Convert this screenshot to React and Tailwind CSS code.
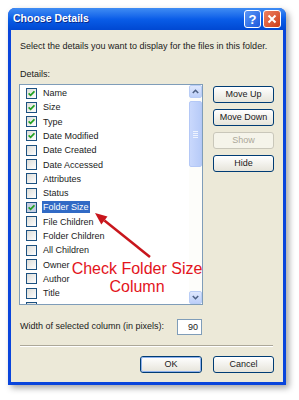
import React from "react";

const items = [
  ["Name", true],
  ["Size", true],
  ["Type", true],
  ["Date Modified", true],
  ["Date Created", false],
  ["Date Accessed", false],
  ["Attributes", false],
  ["Status", false],
  ["Folder Size", true, true],
  ["File Children", false],
  ["Folder Children", false],
  ["All Children", false],
  ["Owner", false],
  ["Author", false],
  ["Title", false],
  ["", false],
];

function Check({ on, sel }) {
  return (
    <span
      className={`w-[11px] h-[11px] shrink-0 border border-[#1c5180] flex items-center justify-center ${
        sel ? "bg-[#c3cde2]" : "bg-linear-to-br from-[#dcdcd7] to-white"
      }`}
    >
      {on && (
        <svg width="7" height="7" viewBox="0 0 7 7">
          <path d="M0.6 3.3 L2.6 5.3 L6.4 1.3" stroke="#21a121" strokeWidth="1.7" fill="none" />
        </svg>
      )}
    </span>
  );
}

function XpButton({ children, disabled, def }) {
  if (disabled) {
    return (
      <div className="h-[17px] rounded-[3px] border border-[#c9c7ba] bg-[#f5f4ea] text-[#aca899] flex items-center justify-center">
        {children}
      </div>
    );
  }
  return (
    <div className="h-[17px] rounded-[3px] border border-[#003c74] bg-linear-to-b from-white to-[#e6e4da] flex items-center justify-center">
      <div
        className={`w-full h-full rounded-[2px] flex items-center justify-center ${
          def ? "border border-[#8eb1ec]" : ""
        }`}
      >
        {children}
      </div>
    </div>
  );
}

function ScrollArrow({ down }) {
  return (
    <div className="h-[13px] w-[13px] rounded-[2px] border border-[#b9cdf6] bg-linear-to-b from-[#dfe8fd] to-[#bccff9] flex items-center justify-center">
      <svg width="7" height="5" viewBox="0 0 7 5">
        <path
          d={down ? "M0.8 1 L3.5 3.7 L6.2 1" : "M0.8 4 L3.5 1.3 L6.2 4"}
          stroke="#4d6185"
          strokeWidth="1.6"
          fill="none"
        />
      </svg>
    </div>
  );
}

export default function App() {
  return (
    <div
      className="relative w-[299px] h-[400px] bg-white pt-[8px] pl-[8px] text-[9px] text-[#1a1a1a]"
      style={{ fontFamily: '"Liberation Sans", Arial, sans-serif' }}
    >
      <div className="w-[278px] h-[377px] rounded-t-[7px] bg-[#0a45dc] px-[3px] pb-[3px] flex flex-col shadow-[3px_3px_6px_rgba(0,0,0,0.35)]">
        {/* title bar */}
        <div className="h-[23px] -mx-[3px] px-[5px] rounded-t-[7px] bg-linear-to-b from-[#3f8cf3] via-[#0a5de8] to-[#0148d2] flex items-center">
          <span className="flex-1 text-white font-bold text-[10.5px] [text-shadow:1px_1px_0_#0a2a8a]">
            Choose Details
          </span>
          <div className="w-[17px] h-[18px] rounded-[3px] border border-white bg-linear-to-br from-[#5a97f7] to-[#1d57dc] flex items-center justify-center text-white font-bold text-[13px] leading-none">
            ?
          </div>
          <div className="ml-[2px] w-[18px] h-[18px] rounded-[3px] border border-white bg-linear-to-br from-[#ee8060] to-[#cc3b12] flex items-center justify-center">
            <svg width="10" height="10" viewBox="0 0 10 10">
              <path d="M1.5 1.5 L8.5 8.5 M8.5 1.5 L1.5 8.5" stroke="white" strokeWidth="2" />
            </svg>
          </div>
        </div>

        {/* body */}
        <div className="flex-1 bg-[#ece9d8] pt-[11px] pl-[8px] pr-[9px] pb-[9px] flex flex-col">
          <div className="h-[11px] leading-[11px] pl-[1px]">
            Select the details you want to display for the files in this folder.
          </div>
          <div className="h-[11px] leading-[11px] pl-[1px] mt-[17px]">Details:</div>

          <div className="mt-[4px] flex gap-[10px]">
            {/* list box */}
            <div className="w-[184px] h-[221px] border border-[#7f9db9] bg-white flex overflow-hidden">
              <div className="flex-1 pt-[1px] overflow-hidden">
                {items.map(([label, on, sel], i) => (
                  <div key={i} className="h-[14.29px] flex items-center pl-[6px] gap-[5px]">
                    <Check on={on} sel={sel} />
                    {label && (
                      <span
                        className={`h-[12px] leading-[12px] px-[1px] ${
                          sel ? "bg-[#316ac5] text-white" : ""
                        }`}
                      >
                        {label}
                      </span>
                    )}
                  </div>
                ))}
              </div>
              <div className="w-[13px] bg-[#fdfdfa] flex flex-col">
                <ScrollArrow />
                <div className="mt-[3px] h-[66px] rounded-[2px] border border-[#b4c8f6] bg-linear-to-r from-[#c9d8fc] to-[#b7cbf8] flex flex-col items-center justify-center gap-[1px]">
                  <div className="w-[5px] h-px bg-[#eef3fe]" />
                  <div className="w-[5px] h-px bg-[#eef3fe]" />
                  <div className="w-[5px] h-px bg-[#eef3fe]" />
                  <div className="w-[5px] h-px bg-[#eef3fe]" />
                </div>
                <div className="flex-1" />
                <ScrollArrow down />
              </div>
            </div>

            {/* side buttons */}
            <div className="w-[61px] mt-[2px] flex flex-col gap-[6px]">
              <XpButton>Move Up</XpButton>
              <XpButton>Move Down</XpButton>
              <XpButton disabled>Show</XpButton>
              <XpButton>Hide</XpButton>
            </div>
          </div>

          <div className="mt-[14px] h-[16px] flex items-center pl-[1px]">
            <span className="w-[157px]">Width of selected column (in pixels):</span>
            <div className="w-[25px] h-[16px] border border-[#7f9db9] bg-white text-right pr-[3px] leading-[14px]">
              90
            </div>
          </div>

          <div className="mt-[10px] ml-[1px] mr-[1px] h-[2px] border-t border-[#aca899] border-b border-b-white" />

          <div className="mt-[9px] flex justify-end gap-[11px]">
            <div className="w-[62px]">
              <XpButton def>OK</XpButton>
            </div>
            <div className="w-[61px]">
              <XpButton>Cancel</XpButton>
            </div>
          </div>
        </div>
      </div>

      {/* annotation */}
      <svg className="absolute left-0 top-0 pointer-events-none" width="299" height="400">
        <line x1="150" y1="257" x2="104.4" y2="220.5" stroke="#c8161c" strokeWidth="2.5" />
        <polygon points="95,213 107.5,216.6 101.3,224.4" fill="#c8161c" />
      </svg>
      <div className="absolute left-[52px] top-[260px] w-[170px] text-center text-[16px] leading-[18px] text-[#e3141c]">
        Check Folder Size
        <br />
        Column
      </div>
    </div>
  );
}
